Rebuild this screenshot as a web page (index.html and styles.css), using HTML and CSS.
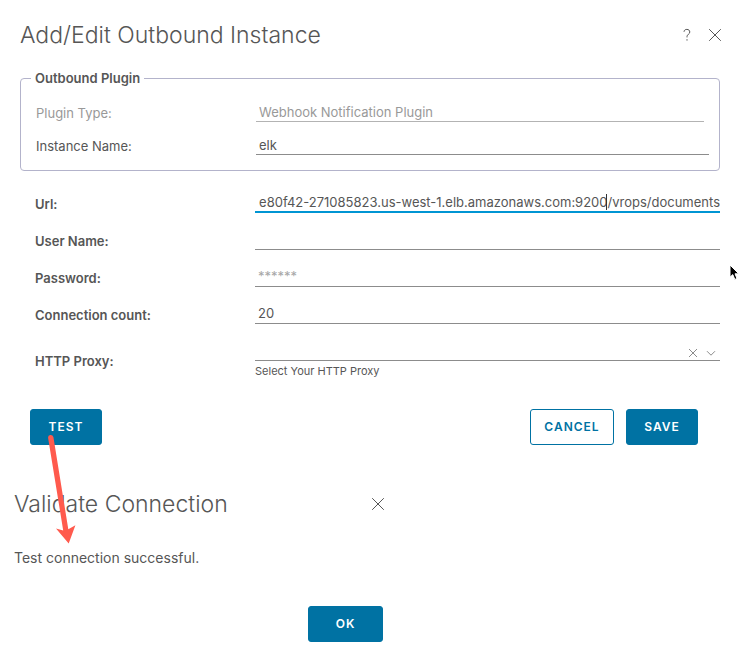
FILE: index.html
```html
<!DOCTYPE html>
<html lang="en">
<head>
<meta charset="utf-8">
<meta name="viewport" content="width=device-width, initial-scale=1">
<title>Add/Edit Outbound Instance</title>
<link rel="stylesheet" href="styles.css">
</head>
<body>
<main class="page">
  <section class="dialog" aria-labelledby="edit-title">
    <header class="dialog-header">
      <h1 class="title" id="edit-title">Add/Edit Outbound Instance</h1>
      <div class="header-actions">
        <button class="icon-button" type="button" aria-label="Help">
          <svg width="16" height="16" viewBox="0 0 16 16"><path d="M5 4.8C5.2 3 6.3 2.4 7.9 2.4C9.6 2.4 10.8 3.4 10.8 5C10.8 7.2 8 7.3 8 9.6V10.4M8 12.2V13.6"/></svg>
        </button>
        <button class="icon-button" type="button" aria-label="Close">
          <svg width="16" height="16" viewBox="0 0 16 16"><path d="M2.2 2.2L13.8 13.8M13.8 2.2L2.2 13.8"/></svg>
        </button>
      </div>
    </header>
    <form class="form">
      <fieldset class="group">
        <legend class="legend">Outbound Plugin</legend>
        <div class="row disabled">
          <label class="label" for="plugin">Plugin Type:</label>
          <div class="field field-short"><input class="input" id="plugin" type="text" value="Webhook Notification Plugin" disabled></div>
        </div>
        <div class="row">
          <label class="label" for="name">Instance Name:</label>
          <div class="field"><input class="input" id="name" type="text" value="elk"></div>
        </div>
      </fieldset>
      <div class="fields">
        <div class="row">
          <label class="label" for="url">Url:</label>
          <div class="field">
            <input class="input active" id="url" type="text" value="e80f42-271085823.us-west-1.elb.amazonaws.com:9200/vrops/documents">
            <span class="caret"></span>
          </div>
        </div>
        <div class="row">
          <label class="label" for="user">User Name:</label>
          <div class="field"><input class="input" id="user" type="text"></div>
        </div>
        <div class="row">
          <label class="label" for="password">Password:</label>
          <div class="field"><input class="input" id="password" type="password" placeholder="******"></div>
        </div>
        <div class="row">
          <label class="label" for="count">Connection count:</label>
          <div class="field"><input class="input" id="count" type="text" inputmode="numeric" value="20"></div>
        </div>
        <div class="row row-proxy">
          <label class="label" for="proxy">HTTP Proxy:</label>
          <div class="field">
            <select class="input" id="proxy" aria-describedby="proxy-help"><option value=""></option></select>
            <div class="select-icons">
              <button class="clear" type="button" aria-label="Clear HTTP proxy">
                <svg width="12" height="12" viewBox="0 0 12 12"><path d="M2 2L10 10M10 2L2 10"/></svg>
              </button>
              <svg width="12" height="12" viewBox="0 0 12 12"><path d="M2 4.2L6 8.2L10 4.2"/></svg>
            </div>
            <p class="help" id="proxy-help">Select Your HTTP Proxy</p>
          </div>
        </div>
      </div>
      <div class="actions">
        <button class="button primary" type="button">TEST</button>
        <div class="action-group">
          <button class="button outline" type="button">CANCEL</button>
          <button class="button primary" type="button">SAVE</button>
        </div>
      </div>
    </form>
    <svg class="pointer" width="12" height="18" viewBox="0 0 12 18"><path d="M1 1V13.2L3.8 10.6L5.8 15.4L8 14.5L6 9.8H9.8Z"/></svg>
  </section>

  <section class="result" aria-labelledby="result-title">
    <header class="result-header">
      <h2 class="title" id="result-title">Validate Connection</h2>
      <button class="icon-button" type="button" aria-label="Close">
        <svg width="16" height="16" viewBox="0 0 16 16"><path d="M2.2 2.2L13.8 13.8M13.8 2.2L2.2 13.8"/></svg>
      </button>
    </header>
    <p class="message">Test connection successful.</p>
    <div class="result-actions"><button class="button primary wide" type="button">OK</button></div>
    <svg class="arrow" width="32" height="112" viewBox="0 0 32 112"><path d="M5.4 3Q4.6 .6 2.2 1Q-.4 1.6 .2 4.4L15.2 96.4L8 94.5L20.7 109.5L27.4 91.2L20.3 95.3Z"/></svg>
  </section>
</main>
</body>
</html>
```
FILE: styles.css
```css
* { box-sizing: border-box; }

body {
  margin: 0;
  background: #fff;
  color: #565656;
  font: 13px/20px Metropolis, Inter, sans-serif;
}

h1, h2, p { margin: 0; }

button, input, select { font: inherit; color: inherit; }

svg { display: block; fill: none; stroke: currentColor; }

.dialog {
  position: relative;
  padding: 19px 22px 0 20px;
}

.dialog-header, .result-header {
  display: flex;
  align-items: center;
  justify-content: space-between;
}

.title {
  font-size: 23px;
  line-height: 32px;
  font-weight: 300;
}

.header-actions { display: flex; gap: 12px; margin-right: -3px; }

.icon-button {
  padding: 0;
  border: 0;
  background: none;
}

.group {
  margin: 17px 0 0;
  padding: 9px 10px 7px 10px;
  border: 1px solid #b3b3cb;
  border-radius: 4px;
}

.legend {
  padding: 0 4px;
  font-weight: 600;
}

.row {
  display: grid;
  grid-template-columns: 220px minmax(0, 1fr);
  height: 37px;
}

.label { padding-top: 9px; }

.field { position: relative; }

.group .row { height: 33px; margin-left: 5px; }
.group .label { padding-top: 6px; }
.group .input { height: 25px; }

.disabled { color: #999; }
.field-short { margin-right: 5px; }

.fields {
  padding: 14px 0 0 15px;
}

.fields .label { font-weight: 600; }

.input {
  display: block;
  width: 100%;
  height: 28px;
  padding: 6px 3px 0;
  border: 0;
  border-bottom: 1px solid #8c8c8c;
  border-radius: 0;
  background: none;
  appearance: none;
  outline: 0;
}

.input:disabled { border-color: #b3b3b3; }
.input::placeholder { color: #a6a6a6; opacity: 1; }

.input.active {
  padding: 8px 0 0;
  border-bottom: 2px solid #0095d3;
  text-align: right;
}

.caret {
  position: absolute;
  top: 9px;
  right: 113px;
  width: 1px;
  height: 16px;
  background: #333;
}

.row-proxy { height: 58px; }
.row-proxy .label { padding-top: 18px; }

.select-icons {
  position: absolute;
  top: 14px;
  right: 3px;
  display: flex;
  gap: 6px;
  color: #8c8c8c;
}

.clear { padding: 0; border: 0; background: none; color: inherit; }

.help {
  font-size: 11px;
  line-height: 20px;
}

.actions {
  display: flex;
  justify-content: space-between;
  padding: 18px 22px 0 10px;
}

.action-group { display: flex; gap: 12px; }

.button {
  min-width: 72px;
  height: 36px;
  padding: 0 12px;
  border: 1px solid #0072a3;
  border-radius: 3px;
  font-size: 12px;
  font-weight: 600;
  letter-spacing: 1px;
}

.primary { background: #0072a3; color: #fff; }
.outline { min-width: 84px; background: #fff; color: #0072a3; }
.wide { min-width: 75px; }

.pointer {
  position: absolute;
  top: 264px;
  right: 1px;
  fill: #000;
  stroke: #fff;
}

.result {
  position: relative;
  max-width: 386px;
  margin-top: 43px;
  padding: 0 0 20px 14px;
}

.message {
  margin-top: 28px;
  font-size: 14px;
}

.result-actions {
  display: flex;
  justify-content: flex-end;
  padding: 38px 3px 0 0;
}

.arrow {
  position: absolute;
  top: -54px;
  left: 48px;
  fill: #ff5a4d;
  stroke: none;
}
```
